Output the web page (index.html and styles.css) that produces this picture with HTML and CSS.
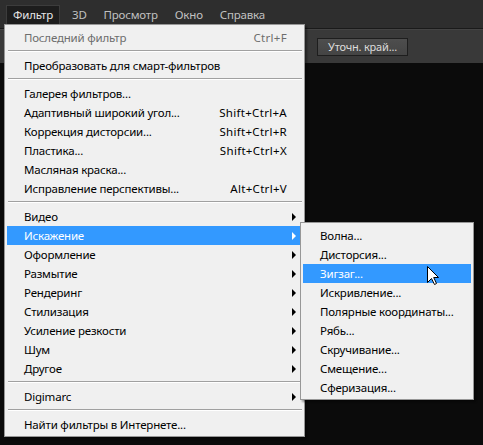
FILE: index.html
```html
<!DOCTYPE html>
<html lang="ru">
<head>
<meta charset="utf-8">
<link rel="stylesheet" href="styles.css">
</head>
<body>
<div class="app">
  <div class="menubar">
    <span class="mb-item active">Фильтр</span>
    <span class="mb-item">3D</span>
    <span class="mb-item">Просмотр</span>
    <span class="mb-item">Окно</span>
    <span class="mb-item">Справка</span>
  </div>
  <div class="optionsbar">
    <button class="btn">Уточн. край...</button>
  </div>
  <div class="canvas"></div>

  <div class="menu main-menu">
    <div class="item disabled"><span class="label">Последний фильтр</span><span class="key">Ctrl+F</span><span class="arr"></span></div>
    <div class="sep"></div>
    <div class="item"><span class="label">Преобразовать для смарт-фильтров</span><span class="arr"></span></div>
    <div class="sep"></div>
    <div class="item"><span class="label">Галерея фильтров...</span><span class="arr"></span></div>
    <div class="item"><span class="label">Адаптивный широкий угол...</span><span class="key">Shift+Ctrl+A</span><span class="arr"></span></div>
    <div class="item"><span class="label">Коррекция дисторсии...</span><span class="key">Shift+Ctrl+R</span><span class="arr"></span></div>
    <div class="item"><span class="label">Пластика...</span><span class="key">Shift+Ctrl+X</span><span class="arr"></span></div>
    <div class="item"><span class="label">Масляная краска...</span><span class="arr"></span></div>
    <div class="item"><span class="label">Исправление перспективы...</span><span class="key">Alt+Ctrl+V</span><span class="arr"></span></div>
    <div class="sep"></div>
    <div class="item sub"><span class="label">Видео</span><span class="arr"></span></div>
    <div class="item sub hl"><span class="label">Искажение</span><span class="arr"></span></div>
    <div class="item sub"><span class="label">Оформление</span><span class="arr"></span></div>
    <div class="item sub"><span class="label">Размытие</span><span class="arr"></span></div>
    <div class="item sub"><span class="label">Рендеринг</span><span class="arr"></span></div>
    <div class="item sub"><span class="label">Стилизация</span><span class="arr"></span></div>
    <div class="item sub"><span class="label">Усиление резкости</span><span class="arr"></span></div>
    <div class="item sub"><span class="label">Шум</span><span class="arr"></span></div>
    <div class="item sub"><span class="label">Другое</span><span class="arr"></span></div>
    <div class="sep"></div>
    <div class="item sub"><span class="label">Digimarc</span><span class="arr"></span></div>
    <div class="sep"></div>
    <div class="item"><span class="label">Найти фильтры в Интернете...</span><span class="arr"></span></div>
  </div>

  <div class="menu sub-menu">
    <div class="item"><span class="label">Волна...</span></div>
    <div class="item"><span class="label">Дисторсия...</span></div>
    <div class="item hl"><span class="label">Зигзаг...</span></div>
    <div class="item"><span class="label">Искривление...</span></div>
    <div class="item"><span class="label">Полярные координаты...</span></div>
    <div class="item"><span class="label">Рябь...</span></div>
    <div class="item"><span class="label">Скручивание...</span></div>
    <div class="item"><span class="label">Смещение...</span></div>
    <div class="item"><span class="label">Сферизация...</span></div>
  </div>

  <svg class="cursor" width="13" height="20" viewBox="0 0 13 20">
    <path d="M0.5 0.5 L0.5 16.5 L4.5 12.5 L7.5 18.5 L9.5 17.5 L6.7 11.5 L11.5 11.5 Z" fill="#fff" stroke="#000" stroke-width="1" stroke-linejoin="miter"/>
  </svg>
</div>
</body>
</html>
```
FILE: styles.css
```css
* { box-sizing: border-box; }
html, body { margin: 0; padding: 0; }
body {
  background: #0b0b0b;
  font-family: "Noto Sans", "Open Sans", sans-serif;
  font-size: 11.5px;
  letter-spacing: -0.2px;
  overflow: hidden;
}
.app {
  position: relative;
  width: 483px;
  height: 445px;
  display: flex;
  flex-direction: column;
}
.menubar {
  height: 29px;
  background: #2e2e2e;
  border-bottom: 1px solid #1a1a1a;
  display: flex;
  align-items: flex-start;
  padding-left: 6px;
  padding-top: 5px;
}
.mb-item {
  color: #c0c0c0;
  height: 19px;
  line-height: 19px;
  padding: 0 9px 0 8px;
}
.mb-item.active {
  background: #1d1d1d;
  color: #e6e6e6;
  height: 24px;
  border: 1px solid #3c3c3c;
  border-bottom: none;
  line-height: 18px;
  padding: 0 6px 0 6px;
  margin-right: 4px;
}
.optionsbar {
  height: 34px;
  background: #393939;
  border-top: 1px solid #444;
  display: flex;
  align-items: center;
  padding-left: 317px;
}
.btn {
  height: 18px;
  width: 91px;
  padding: 0;
  background: linear-gradient(#4e4e4e, #444);
  border: 1px solid #1e1e1e;
  color: #dcdcdc;
  font-family: "Noto Sans", "Open Sans", sans-serif;
  font-size: 11px;
  letter-spacing: -0.2px;
  line-height: 15px;
}
.canvas { flex: 1; background: #0b0b0b; }

.menu {
  position: absolute;
  background: #f0f0f0;
  border: 1px solid #979797;
  padding: 3px 2px 2px 2px;
  color: #000;
}
.main-menu {
  left: 4px;
  top: 24px;
  width: 301px;
  box-shadow: 2px 2px 2px rgba(0,0,0,0.4);
}
.sub-menu {
  left: 300px;
  top: 222px;
  width: 174px;
  box-shadow: 2px 2px 2px rgba(0,0,0,0.4);
}
.item {
  height: 19px;
  display: flex;
  align-items: center;
  padding-left: 17px;
  white-space: nowrap;
}
.item .label { flex: 1; }
.item .key { text-align: right; letter-spacing: 0.3px; }
.item .arr {
  width: 15px;
  height: 19px;
  flex: none;
  display: flex;
  align-items: center;
  padding-left: 5px;
}
.item.sub .arr::before {
  content: "";
  display: block;
  border-left: 4px solid #000;
  border-top: 4px solid transparent;
  border-bottom: 4px solid transparent;
}
.item.hl { background: #3399ff; color: #fff; }
.item.hl.sub .arr::before { border-left-color: #fff; }
.item.disabled { color: #6d6d6d; }
.sep {
  height: 9px;
  padding-top: 3px;
  margin-left: 1px;
}
.sep::before {
  content: "";
  display: block;
  height: 1px;
  background: #a0a0a0;
  border-bottom: 1px solid #fff;
  box-sizing: content-box;
}
.cursor {
  position: absolute;
  left: 427px;
  top: 266px;
}
```
